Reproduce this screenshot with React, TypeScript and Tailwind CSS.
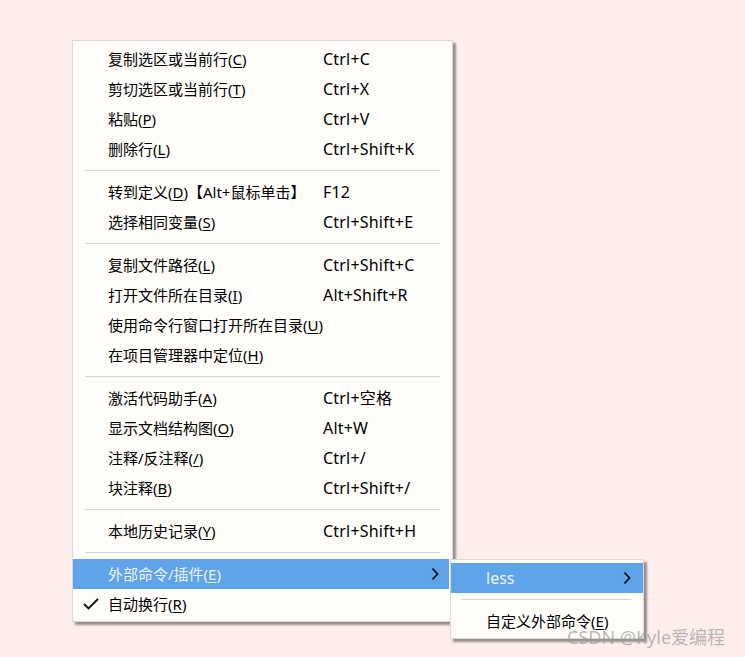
import React from "react";

type Item = { label: string; key: string; shortcut?: string };

const groups: Item[][] = [
  [
    { label: "复制选区或当前行", key: "C", shortcut: "Ctrl+C" },
    { label: "剪切选区或当前行", key: "T", shortcut: "Ctrl+X" },
    { label: "粘贴", key: "P", shortcut: "Ctrl+V" },
    { label: "删除行", key: "L", shortcut: "Ctrl+Shift+K" },
  ],
  [
    { label: "转到定义", key: "D", shortcut: "F12" },
    { label: "选择相同变量", key: "S", shortcut: "Ctrl+Shift+E" },
  ],
  [
    { label: "复制文件路径", key: "L", shortcut: "Ctrl+Shift+C" },
    { label: "打开文件所在目录", key: "I", shortcut: "Alt+Shift+R" },
    { label: "使用命令行窗口打开所在目录", key: "U" },
    { label: "在项目管理器中定位", key: "H" },
  ],
  [
    { label: "激活代码助手", key: "A", shortcut: "Ctrl+空格" },
    { label: "显示文档结构图", key: "O", shortcut: "Alt+W" },
    { label: "注释/反注释", key: "/", shortcut: "Ctrl+/" },
    { label: "块注释", key: "B", shortcut: "Ctrl+Shift+/" },
  ],
  [{ label: "本地历史记录", key: "Y", shortcut: "Ctrl+Shift+H" }],
];

function Chevron() {
  return (
    <svg width="8" height="14" viewBox="0 0 8 14" className="shrink-0">
      <polyline points="1.5,1.5 6.5,7 1.5,12.5" fill="none" stroke="#111" strokeWidth="1.8" />
    </svg>
  );
}

function Label({ label, k }: { label: string; k: string }) {
  return (
    <span className="whitespace-nowrap">
      {label}(<u className="underline-offset-2">{k}</u>)
    </span>
  );
}

function Separator({ inset = "mx-[12px]" }: { inset?: string }) {
  return (
    <div className="h-[13px] flex items-center">
      <div className={`h-px flex-1 bg-[#d3d3d3] ${inset}`} />
    </div>
  );
}

function Row({ item }: { item: Item }) {
  return (
    <div className="h-[30px] flex items-center">
      <div className="pl-[35px] w-[250px]">
        <Label label={item.label} k={item.key} />
        {item.key === "D" && <span>【Alt+鼠标单击】</span>}
      </div>
      <div className="whitespace-nowrap text-[16px] tracking-[0.2px]">{item.shortcut}</div>
    </div>
  );
}

export default function App() {
  return (
    <div
      className="w-[745px] h-[657px] bg-[#fdeeec] relative overflow-hidden text-[15px] text-black"
      style={{ fontFamily: '"Noto Sans", "Noto Sans CJK SC", sans-serif' }}
    >
      <div className="pt-[40px] pl-[72px]">
        <div className="relative w-[381px] bg-[#fffdfa] border border-[#dadada] pt-[3px] pb-[2px] pr-[3px] shadow-[3px_3px_2px_rgba(0,0,0,0.4)]">
          {groups.map((g, i) => (
            <div key={i}>
              {g.map((item) => (
                <Row key={item.label} item={item} />
              ))}
              <Separator inset="ml-[12px] mr-[9px]" />
            </div>
          ))}
          <div className="h-[30px] flex items-center bg-[#5fa3e8] text-[#eef4ff] pr-[10px]">
            <div className="pl-[35px] flex-1">
              <Label label="外部命令/插件" k="E" />
            </div>
            <Chevron />
          </div>
          <div className="h-[30px] flex items-center">
            <div className="w-[35px] flex justify-center">
              <svg width="16" height="12" viewBox="0 0 16 12">
                <polyline points="1,6 5.5,10.5 15,1" fill="none" stroke="#111" strokeWidth="1.9" />
              </svg>
            </div>
            <Label label="自动换行" k="R" />
          </div>

          <div className="absolute left-[377px] top-[518px] w-[194px] bg-[#fffdfa] border border-[#dadada] pt-[3px] pb-[2px] shadow-[3px_3px_2px_rgba(0,0,0,0.4)]">
            <div className="h-[30px] flex items-center bg-[#5fa3e8] text-[#eef4ff] pr-[12px]">
              <div className="pl-[35px] flex-1 text-[16px]">less</div>
              <Chevron />
            </div>
            <Separator inset="ml-[11px] mr-[12px]" />
            <div className="h-[30px] flex items-center pl-[35px]">
              <Label label="自定义外部命令" k="E" />
            </div>
          </div>
        </div>
      </div>
      <div className="absolute left-[567px] top-[624px] text-[18px] text-[#9a9a9a]/70 whitespace-nowrap">
        CSDN @Kyle爱编程
      </div>
    </div>
  );
}
